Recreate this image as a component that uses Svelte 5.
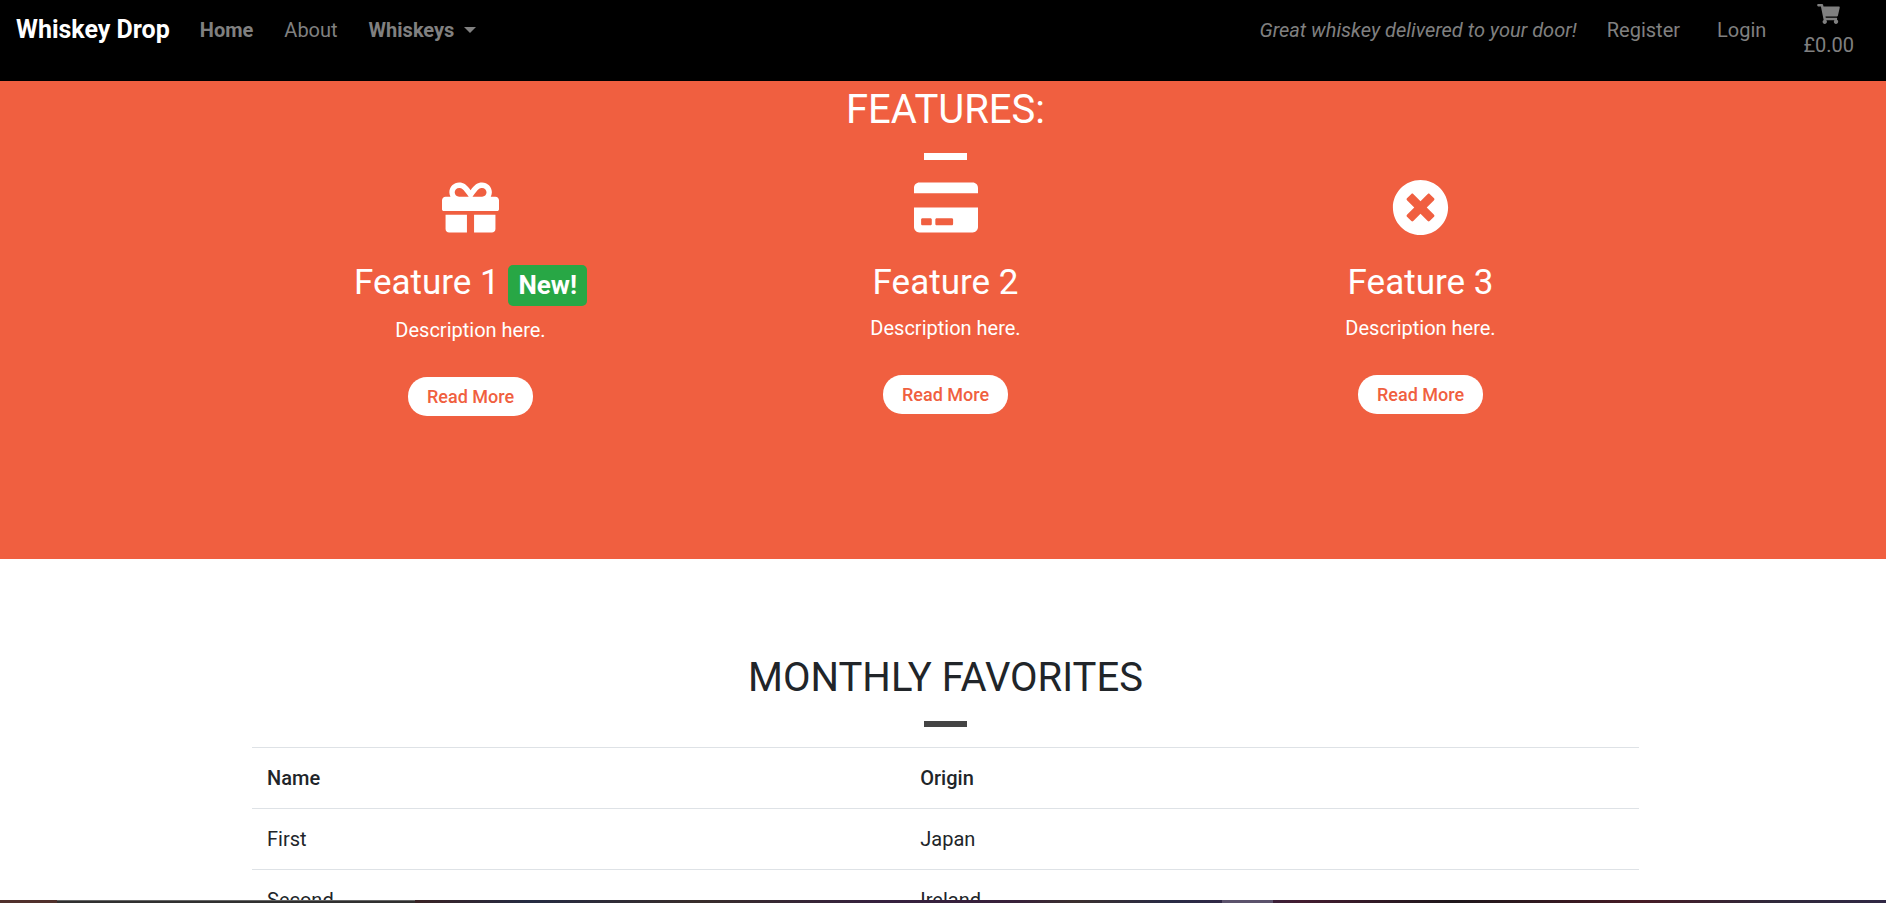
<script>
  const icons = {
    gift: {
      box: '0 0 512 512',
      width: 57,
      path: 'M32 448c0 17.7 14.3 32 32 32h160V320H32v128zm256 32h160c17.7 0 32-14.3 32-32V320H288v160zm192-320h-42.1c6.2-12.1 10.1-25.5 10.1-40 0-48.5-39.5-88-88-88-41.6 0-68.5 21.3-103 68.3-34.5-47-61.4-68.3-103-68.3-48.5 0-88 39.5-88 88 0 14.5 3.8 27.9 10.1 40H32c-17.7 0-32 14.3-32 32v80c0 8.8 7.2 16 16 16h480c8.8 0 16-7.2 16-16v-80c0-17.7-14.3-32-32-32zm-326.1 0c-22.1 0-40-17.9-40-40s17.9-40 40-40c19.9 0 34.6 3.3 86.1 80h-86.1zm206.1 0h-86.1c51.4-76.5 65.7-80 86.1-80 22.1 0 40 17.9 40 40s-17.9 40-40 40z'
    },
    card: {
      box: '0 0 576 512',
      width: 64,
      path: 'M0 432c0 26.5 21.5 48 48 48h480c26.5 0 48-21.5 48-48V256H0v176zm192-68c0-6.6 5.4-12 12-12h136c6.6 0 12 5.4 12 12v40c0 6.6-5.4 12-12 12H204c-6.6 0-12-5.4-12-12v-40zm-128 0c0-6.6 5.4-12 12-12h72c6.6 0 12 5.4 12 12v40c0 6.6-5.4 12-12 12H76c-6.6 0-12-5.4-12-12v-40zM576 80v48H0V80c0-26.5 21.5-48 48-48h480c26.5 0 48 21.5 48 48z'
    },
    cross: {
      box: '0 0 512 512',
      width: 57,
      path: 'M256 8C119 8 8 119 8 256s111 248 248 248 248-111 248-248S393 8 256 8zm121.6 313.1c4.7 4.7 4.7 12.3 0 17L338 377.6c-4.7 4.7-12.3 4.7-17 0L256 312l-65.1 65.6c-4.7 4.7-12.3 4.7-17 0L134.4 338c-4.7-4.7-4.7-12.3 0-17l65.6-65-65.6-65.1c-4.7-4.7-4.7-12.3 0-17l39.6-39.6c4.7-4.7 12.3-4.7 17 0l65 65.7 65.1-65.6c4.7-4.7 12.3-4.7 17 0l39.6 39.6c4.7 4.7 4.7 12.3 0 17L312 256l65.6 65.1z'
    }
  };

  const features = [
    { title: 'Feature 1', icon: icons.gift, badge: 'New!' },
    { title: 'Feature 2', icon: icons.card },
    { title: 'Feature 3', icon: icons.cross }
  ];

  const favorites = [
    { name: 'First', origin: 'Japan' },
    { name: 'Second', origin: 'Ireland' }
  ];
</script>

<div class="page">
  <nav class="navbar">
    <a class="brand" href="#top">Whiskey Drop</a>
    <a class="link strong" href="#home">Home</a>
    <a class="link" href="#about">About</a>
    <button class="link strong menu" type="button">Whiskeys<span class="caret"></span></button>
    <span class="slogan">Great whiskey delivered to your door!</span>
    <a class="link account" href="#register">Register</a>
    <a class="link account" href="#login">Login</a>
    <a class="link cart" href="#cart">
      <svg viewBox="0 0 576 512" width="23" height="20" aria-hidden="true">
        <path d="M528.12 301.319l47.273-208C578.806 78.301 567.391 64 551.99 64H159.208l-9.166-44.81C147.758 8.021 137.93 0 126.529 0H24C10.745 0 0 10.745 0 24v16c0 13.255 10.745 24 24 24h69.883l70.248 343.435C147.325 417.1 136 435.222 136 456c0 30.928 25.072 56 56 56s56-25.072 56-56c0-15.674-6.447-29.835-16.824-40h209.647C430.447 426.165 424 440.326 424 456c0 30.928 25.072 56 56 56s56-25.072 56-56c0-22.172-12.888-41.332-31.579-50.405l5.517-24.276c3.413-15.018-8.002-29.319-23.403-29.319H218.117l-6.545-32h293.145c11.206 0 20.92-7.754 23.403-18.681z" />
      </svg>
      <span>£0.00</span>
    </a>
  </nav>

  <section class="features">
    <h2>FEATURES:</h2>
    <hr class="rule" />
    <div class="columns">
      {#each features as feature}
        <article class="feature">
          <svg viewBox={feature.icon.box} width={feature.icon.width} height="57" aria-hidden="true">
            <path d={feature.icon.path} />
          </svg>
          <h3>
            {feature.title}
            {#if feature.badge}<span class="badge">{feature.badge}</span>{/if}
          </h3>
          <p>Description here.</p>
          <button class="more" type="button">Read More</button>
        </article>
      {/each}
    </div>
  </section>

  <section class="favorites">
    <h2>MONTHLY FAVORITES</h2>
    <hr class="rule dark" />
    <table>
      <thead>
        <tr><th scope="col">Name</th><th scope="col">Origin</th></tr>
      </thead>
      <tbody>
        {#each favorites as row}
          <tr><td>{row.name}</td><td>{row.origin}</td></tr>
        {/each}
      </tbody>
    </table>
  </section>

  <div class="taskbar"><i class="window"></i><i class="active"></i></div>
</div>

<style>
  :global(body) {
    margin: 0;
    background: #fff;
  }

  .page {
    height: 100vh;
    overflow: hidden;
    font: 400 20px/30px Roboto, sans-serif;
    color: #212529;
  }

  .page *, .page {
    box-sizing: border-box;
  }

  .navbar {
    display: flex;
    align-items: center;
    padding: 0 22px 21px 16px;
    background: #000;
    color: #808080;
    white-space: nowrap;
  }

  .brand {
    margin-right: 20px;
    font-size: 25px;
    font-weight: 700;
    line-height: 38px;
    color: #fff;
    text-decoration: none;
  }

  .link {
    padding: 0 10px;
    color: inherit;
    text-decoration: none;
  }

  .link + .link {
    margin-left: 11px;
  }

  .strong {
    font-weight: 700;
  }

  .menu {
    display: flex;
    align-items: center;
    border: 0;
    background: none;
    font: inherit;
    font-weight: 700;
  }

  .caret {
    margin-left: 10px;
    border: 6px solid transparent;
    border-top-color: currentColor;
    border-bottom: 0;
  }

  .slogan {
    margin-left: auto;
    margin-right: 20px;
    font-style: italic;
  }

  .link + .account,
  .link + .cart {
    margin-left: 17px;
  }

  .cart {
    display: flex;
    flex-direction: column;
    align-items: center;
  }

  .cart svg {
    margin: 4px 0 6px;
  }

  svg {
    display: block;
    fill: currentColor;
  }

  .features,
  .favorites {
    padding-left: 5px;
    text-align: center;
  }

  .features {
    padding-top: 5px;
    padding-bottom: 143px;
    background: #f05f40;
    color: #fff;
  }

  h2 {
    margin: 0;
    font-size: 40px;
    font-weight: 400;
    line-height: 48px;
  }

  .rule {
    width: 43px;
    height: 7px;
    margin: 19px auto;
    border: 0;
    background: #fff;
  }

  .rule.dark {
    height: 6px;
    margin-bottom: 20px;
    background: #444;
  }

  .columns {
    display: grid;
    grid-template-columns: repeat(3, 1fr);
    max-width: 1425px;
    margin: 0 auto;
  }

  .feature {
    display: flex;
    flex-direction: column;
    align-items: center;
  }

  h3 {
    margin: 26px 0 9px;
    font-size: 35px;
    font-weight: 400;
    line-height: 42px;
  }

  .badge {
    display: inline-block;
    padding: 7px 10px 8px;
    border-radius: 5px;
    background: #28a745;
    font-size: 26px;
    font-weight: 700;
    line-height: 26px;
    vertical-align: baseline;
  }

  p {
    margin: 0 0 32px;
  }

  .more {
    padding: 6px 19px;
    border: 0;
    border-radius: 19px;
    background: #fff;
    color: #f05f40;
    font: 500 18px/27px Roboto, sans-serif;
  }

  .favorites {
    padding-top: 95px;
  }

  table {
    width: calc(100% - 38px);
    max-width: 1387px;
    margin: 0 auto;
    border-spacing: 0;
    text-align: left;
  }

  th,
  td {
    padding: 15px;
    border-top: 1px solid #dee2e6;
  }

  th {
    font-weight: 500;
  }

  th:first-child {
    width: 47.1%;
  }

  .taskbar {
    position: fixed;
    right: 0;
    bottom: 0;
    left: 0;
    height: 3px;
    background: linear-gradient(90deg, #50302c 0 3%, #3a2224 22%, #252b42 28%, #382d2b 37%, #35203f 47%, #38213a 54%, #3b302f 57%, #292b45 62%, #302846 65%, #431c30 69%, #1e171b 77%, #461b25 87%, #30293b 94%, #302744);
  }

  .window,
  .active {
    position: absolute;
    top: 0;
    height: 3px;
  }

  .window {
    left: 3%;
    width: 19%;
    border-top: 1px solid #666;
    background: #303030;
  }

  .active {
    left: 64.8%;
    width: 2.7%;
    background: #5b526c;
  }
</style>
